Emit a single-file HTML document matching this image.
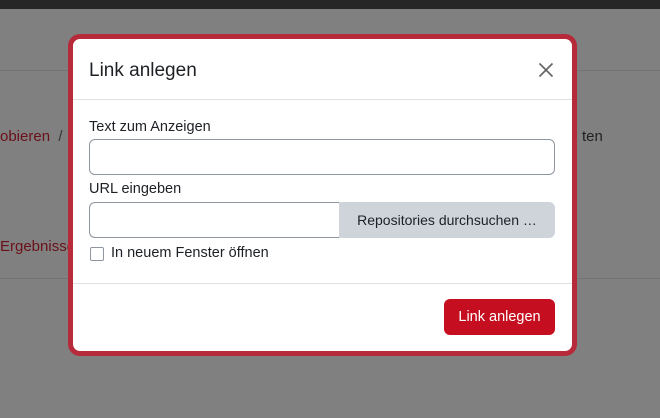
<!DOCTYPE html><html><head><style>
body{margin:0;width:660px;height:418px;overflow:hidden;background:#808080;font-family:"Liberation Sans",sans-serif;position:relative}
.a{position:absolute}
</style></head><body>
<div class="a" style="left:0;top:0;width:660px;height:9px;background:#262626"></div>
<div class="a" style="left:0;top:70px;width:660px;height:1px;background:#747474"></div>
<div class="a" style="left:0;top:278px;width:660px;height:1px;background:#747474"></div>
<div class="a" style="left:0;top:128px;font-size:15px;color:#6a1018">obieren <span style="color:#333">&nbsp;/</span></div>
<div class="a" style="left:582px;top:128px;font-size:15px;color:#222">ten</div>
<div class="a" style="left:0;top:238px;font-size:15px;color:#6a1018">Ergebnisse</div>
<div class="a" style="left:68px;top:34px;width:499px;height:312px;border:5px solid #b62a3a;border-radius:12px;background:#fff">
 <div class="a" style="left:16px;top:21px;font-size:19px;color:#1d2125">Link anlegen</div>
 <svg class="a" style="left:463px;top:21px" width="20" height="20"><path d="M3.5 3.5L16.5 16.5M16.5 3.5L3.5 16.5" stroke="#666" stroke-width="1.7"/></svg>
 <div class="a" style="left:0;top:60px;width:499px;height:1px;background:#dee2e6"></div>
 <div class="a" style="left:16px;top:80px;font-size:14.5px;color:#1d2125">Text zum Anzeigen</div>
 <div class="a" style="left:16px;top:100px;width:464px;height:34px;border:1px solid #8f959e;border-radius:6px"></div>
 <div class="a" style="left:16px;top:142px;font-size:14.5px;color:#1d2125">URL eingeben</div>
 <div class="a" style="left:16px;top:163px;width:250px;height:34px;border:1px solid #8f959e;border-right:none;border-radius:6px 0 0 6px"></div>
 <div class="a" style="left:266px;top:163px;width:216px;height:36px;background:#ced4da;border-radius:0 6px 6px 0;font-size:14px;color:#1d2125;line-height:36px;text-align:center">Repositories durchsuchen …</div>
 <div class="a" style="left:17px;top:208px;width:12px;height:12px;border:1px solid #8f959e;border-radius:2px"></div>
 <div class="a" style="left:38px;top:206px;font-size:14.5px;color:#1d2125">In neuem Fenster öffnen</div>
 <div class="a" style="left:0;top:244px;width:499px;height:1px;background:#dee2e6"></div>
 <div class="a" style="left:371px;top:260px;width:111px;height:36px;background:#c50e20;border-radius:6px;color:#fff;font-size:14.5px;line-height:36px;text-align:center">Link anlegen</div>
</div>
</body></html>
